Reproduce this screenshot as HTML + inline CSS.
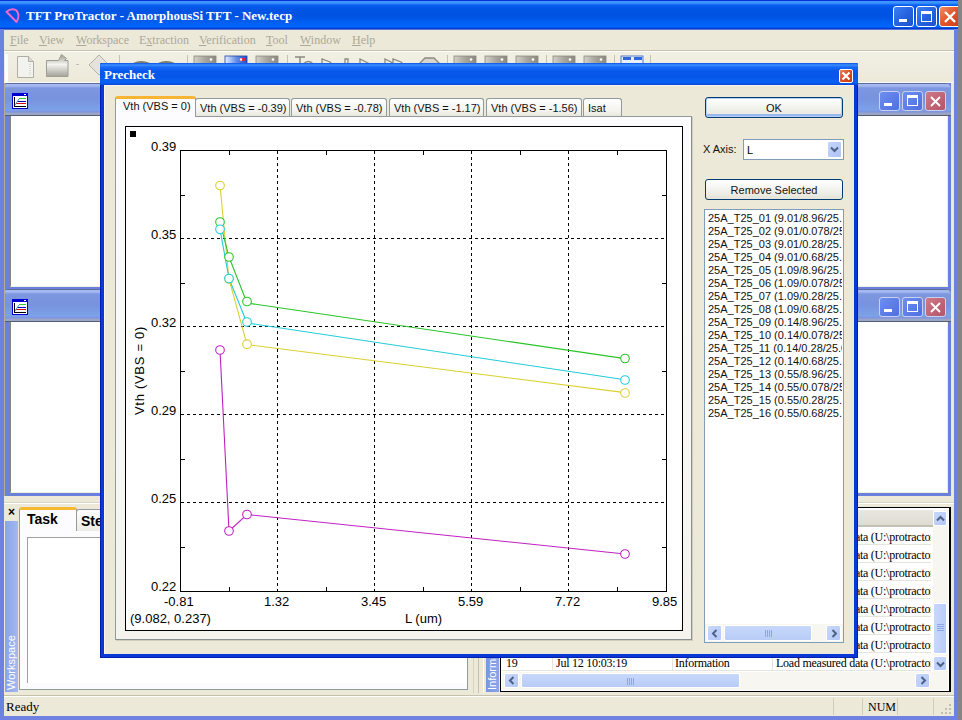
<!DOCTYPE html>
<html><head><meta charset="utf-8">
<style>
*{box-sizing:border-box}
html,body{margin:0;padding:0}
body{width:962px;height:720px;overflow:hidden;position:relative;background:#858585;font-family:"Liberation Sans",sans-serif;font-size:11px;color:#000}
.a{position:absolute}
.serif{font-family:"Liberation Serif",serif}
.tb-btn{position:absolute;border:1px solid #fff;border-radius:3px;background:linear-gradient(135deg,#3c81f3 0%,#2663e0 50%,#1d50d0 100%)}
.mdi-title{border-radius:5px 6px 0 0;background:linear-gradient(#5b6b9b 0,#5b6b9b 1px,#a6b8f2 1px,#a6b8f2 3px,#7d97e0 5px,#7893de 16px,#7ca2e8 27px,#8090e0 29px,#9aa6c8 30px,#9aa6c8 32px,#555e70 32px)}
.ibtn{position:absolute;border:1px solid #c8d2f0;border-radius:3px;background:linear-gradient(135deg,#6d8ef0,#4f6fe0)}
.tab{position:absolute;border:1px solid #919b9c;border-bottom:none;border-radius:3px 3px 0 0;background:linear-gradient(#fefefe,#f4f3ee 70%,#e8e6dc);white-space:nowrap;padding-left:4px;padding-top:1px;line-height:16px;color:#111}
.xpbtn{position:absolute;border:1px solid #003c74;border-radius:3px;background:linear-gradient(#fff,#f0f0ea 60%,#e5e4da);text-align:center;padding-top:1px;color:#111}
.sbtn{position:absolute;border-radius:2px;background:linear-gradient(135deg,#c8d8fc,#b4c8f6);border:1px solid #fff}
</style></head><body>

<!-- ===== MAIN WINDOW FRAME ===== -->
<div class="a" style="left:0;top:0;width:958px;height:720px;background:#ece9d8"></div>
<div class="a" style="left:0;top:0;width:958px;height:30px;background:linear-gradient(#0831d9 0,#0831d9 1px,#3d95ff 1px,#3d95ff 3px,#0a5ff0 5px,#0054e3 9px,#0054e3 17px,#0060f2 23px,#0066ff 27px,#0044d6 28px,#0838c8 29px,#a4b0e8 30px)"></div>
<div class="a" style="left:0;top:29px;width:4px;height:691px;background:#6c82e0"></div>
<div class="a" style="left:954px;top:29px;width:4px;height:691px;background:#6c82e0"></div>
<div class="a" style="left:0;top:716px;width:958px;height:4px;background:#6f82e2"></div>

<!-- title icon -->
<svg class="a" style="left:0;top:0" width="26" height="29"><path d="M6.5 11.8 Q11.5 7.5 16.5 10.5 Q20.5 15 16.5 22 Z" fill="none" stroke="#f068c8" stroke-width="2" stroke-linejoin="round"/></svg>
<div class="a serif" style="left:26px;top:8px;font-size:13px;font-weight:bold;color:#fff;white-space:nowrap;line-height:16px">TFT ProTractor - AmorphousSi TFT - New.tecp</div>

<!-- title buttons -->
<div class="tb-btn" style="left:893px;top:6px;width:21px;height:21px"><div class="a" style="left:5px;top:12px;width:8px;height:3px;background:#fff"></div></div>
<div class="tb-btn" style="left:916px;top:6px;width:21px;height:21px"><div class="a" style="left:4px;top:4px;width:11px;height:11px;border:1px solid #fff;border-top-width:3px"></div></div>
<div class="a" style="left:939px;top:6px;width:19px;height:21px;overflow:hidden"><div class="a" style="left:0;top:0;width:22px;height:21px;border:1px solid #fff;border-radius:3px;background:linear-gradient(135deg,#f08a64,#e0562a 50%,#c8401a)">
<svg class="a" style="left:3px;top:3px" width="14" height="14"><path d="M2 2L12 12M12 2L2 12" stroke="#fff" stroke-width="2.4"/></svg></div></div>

<!-- menu bar -->
<div class="a serif" style="left:4px;top:30px;width:950px;height:20px;color:#aca899;font-size:12px;line-height:20px;white-space:nowrap">
<span class="a" style="left:6px"><u>F</u>ile</span>
<span class="a" style="left:35px"><u>V</u>iew</span>
<span class="a" style="left:72px"><u>W</u>orkspace</span>
<span class="a" style="left:135px">E<u>x</u>traction</span>
<span class="a" style="left:195px"><u>V</u>erification</span>
<span class="a" style="left:262px"><u>T</u>ool</span>
<span class="a" style="left:296px"><u>W</u>indow</span>
<span class="a" style="left:348px"><u>H</u>elp</span>
</div>
<div class="a" style="left:4px;top:50px;width:950px;height:1px;background:#c5c1ae"></div>
<div class="a" style="left:4px;top:51px;width:950px;height:1px;background:#fff"></div>

<!-- toolbar -->
<div id="toolbar" class="a" style="left:4px;top:52px;width:950px;height:31px;background:linear-gradient(#f2f0e4,#ece9d8)"></div>
<div class="a" style="left:5px;top:54px;width:3px;height:28px;background:#fff"></div>
<svg class="a" style="left:0;top:52px" width="700" height="31">
<defs>
<linearGradient id="gw" x1="0" x2="1"><stop offset="0" stop-color="#d4d2c8"/><stop offset="0.5" stop-color="#a8a69c"/><stop offset="1" stop-color="#8c8a80"/></linearGradient>
<linearGradient id="gb" x1="0" x2="1"><stop offset="0" stop-color="#e8f0ff"/><stop offset="0.5" stop-color="#6890e8"/><stop offset="1" stop-color="#2050c0"/></linearGradient>
<linearGradient id="gf" x1="0" y1="0" x2="0" y2="1"><stop offset="0" stop-color="#9c9a90"/><stop offset="0.45" stop-color="#f4f4f0"/><stop offset="1" stop-color="#a4a298"/></linearGradient>
</defs>
<!-- new doc -->
<path d="M17.5 4.5h11l5 5v16h-16z" fill="#f2f2ee" stroke="#b0aea4"/>
<path d="M28.5 4.5v5h5" fill="#dcdad2" stroke="#b0aea4"/>
<path d="M30 12v12" stroke="#c8c6bc" stroke-dasharray="1 1"/>
<!-- folder -->
<path d="M46.5 8.5h12l3-6 5 4-2 2h3.5v16h-21.5z" fill="url(#gf)" stroke="#a09e94"/>
<rect x="76" y="12" width="3" height="1" fill="#c0beb4"/>
<!-- diamond -->
<path d="M99 3l10 10l-10 10l-10-10z" fill="#e4e2da" stroke="#b4b2a8"/>
<rect x="119" y="3" width="1" height="26" fill="#c5c2b2"/>
<path d="M133 11q8-4 17 0z" fill="#7c7e68"/><path d="M158 11q8-4 17 0z" fill="#7c7e68"/>
<rect x="187" y="3" width="1" height="26" fill="#c5c2b2"/>
<rect x="194" y="4" width="22" height="10" fill="url(#gw)" stroke="#8a887e" stroke-width="0.8"/><circle cx="211" cy="7.5" r="1.3" fill="#fff"/>
<rect x="225" y="4" width="22" height="10" fill="url(#gb)" stroke="#2040a0" stroke-width="0.8"/><rect x="240" y="6" width="5" height="3" fill="#e02040"/><circle cx="241" cy="7.5" r="1.2" fill="#fff"/>
<rect x="256" y="4" width="22" height="10" fill="url(#gw)" stroke="#8a887e" stroke-width="0.8"/><circle cx="273" cy="7.5" r="1.3" fill="#fff"/>
<rect x="287" y="3" width="1" height="26" fill="#c5c2b2"/>
<path d="M295 5h10M300 5v8M303 12q6-5 10 0" fill="none" stroke="#8c8a80" stroke-width="1.5"/>
<path d="M322 12v-5l8 3l2 2M345 12v-5h3v5" fill="none" stroke="#8c8a80" stroke-width="1.3"/>
<path d="M360 12v-5l8 4l2 1" fill="none" stroke="#8c8a80" stroke-width="1.3"/>
<path d="M385 12v-5l6 3l2 2v-5l8 3l2 2" fill="none" stroke="#8c8a80" stroke-width="1.3"/>
<path d="M419 12l6-6h9l6 6" fill="#d8d6cc" stroke="#8c8a80" stroke-width="1.3"/>
<rect x="447" y="3" width="1" height="26" fill="#c5c2b2"/>
<rect x="454" y="4" width="22" height="10" fill="url(#gw)" stroke="#8a887e" stroke-width="0.8"/><circle cx="471" cy="7.5" r="1.3" fill="#fff"/>
<rect x="485" y="4" width="22" height="10" fill="url(#gw)" stroke="#8a887e" stroke-width="0.8"/><circle cx="502" cy="7.5" r="1.3" fill="#fff"/>
<rect x="516" y="4" width="22" height="10" fill="url(#gw)" stroke="#8a887e" stroke-width="0.8"/><circle cx="533" cy="7.5" r="1.3" fill="#fff"/>
<rect x="546" y="3" width="1" height="26" fill="#c5c2b2"/>
<rect x="553" y="4" width="22" height="10" fill="url(#gw)" stroke="#8a887e" stroke-width="0.8"/><circle cx="570" cy="7.5" r="1.3" fill="#fff"/>
<rect x="584" y="4" width="22" height="10" fill="url(#gw)" stroke="#8a887e" stroke-width="0.8"/><circle cx="601" cy="7.5" r="1.3" fill="#fff"/>
<rect x="614" y="3" width="1" height="26" fill="#c5c2b2"/>
<rect x="621" y="4" width="22" height="10" fill="#e8eefc" stroke="#3060c0" stroke-width="0.8"/><rect x="623" y="5" width="8" height="3" fill="#3068d8"/><rect x="634" y="5" width="8" height="3" fill="#3068d8"/>
<rect x="650" y="3" width="1" height="26" fill="#c5c2b2"/>
</svg>

<!-- MDI area line -->
<div class="a" style="left:4px;top:82px;width:950px;height:1px;background:#fbfaf4"></div>

<!-- MDI child 1 -->
<div class="a" style="left:4px;top:83px;width:947px;height:207px;background:#6b7fdc"></div>
<div class="a mdi-title" style="left:4px;top:83px;width:947px;height:33px"></div>
<div class="a" style="left:10px;top:116px;width:938px;height:171px;background:#fff;border-left:1px solid #8c8478;border-bottom:1px solid #f0eee0;border-right:1px solid #f0eee0"></div>
<svg class="a" style="left:12px;top:93px" width="16" height="16" viewBox="0 0 16 16" shape-rendering="crispEdges">
<rect x="0" y="0" width="16" height="16" fill="#0000d0"/><rect x="1" y="3" width="14" height="12" fill="#fff"/><rect x="12" y="1" width="2" height="1" fill="#fff"/>
<rect x="2" y="4" width="1" height="10" fill="#000"/><rect x="2" y="13" width="12" height="1" fill="#000"/>
<rect x="4" y="10" width="10" height="1" fill="#e00000"/><rect x="5" y="8" width="9" height="1" fill="#0000c0"/><rect x="7" y="5" width="7" height="1" fill="#40c040"/>
<path d="M3 12L7 6" stroke="#40a0c0" stroke-width="1" shape-rendering="auto"/>
</svg>
<div class="ibtn" style="left:879px;top:91px;width:21px;height:20px"><div class="a" style="left:4px;top:11px;width:8px;height:3px;background:#fff"></div></div>
<div class="ibtn" style="left:902px;top:91px;width:21px;height:20px"><div class="a" style="left:4px;top:3px;width:11px;height:11px;border:1px solid #fff;border-top-width:3px"></div></div>
<div class="ibtn" style="left:925px;top:91px;width:21px;height:20px;background:linear-gradient(135deg,#d07888,#b45468)"><svg class="a" style="left:3px;top:3px" width="13" height="13"><path d="M2 2L11 11M11 2L2 11" stroke="#fff" stroke-width="1.8"/></svg></div>

<!-- MDI child 2 -->
<div class="a" style="left:4px;top:290px;width:947px;height:206px;background:#6b7fdc"></div>
<div class="a mdi-title" style="left:4px;top:289px;width:947px;height:33px"></div>
<div class="a" style="left:10px;top:322px;width:938px;height:171px;background:#fff;border-left:1px solid #8c8478;border-bottom:1px solid #f0eee0;border-right:1px solid #f0eee0"></div>
<div class="a" style="left:4px;top:83px;width:1px;height:413px;background:#b4ac94"></div>


<svg class="a" style="left:12px;top:299px" width="16" height="16" viewBox="0 0 16 16" shape-rendering="crispEdges">
<rect x="0" y="0" width="16" height="16" fill="#0000d0"/><rect x="1" y="3" width="14" height="12" fill="#fff"/><rect x="12" y="1" width="2" height="1" fill="#fff"/>
<rect x="2" y="4" width="1" height="10" fill="#000"/><rect x="2" y="13" width="12" height="1" fill="#000"/>
<rect x="4" y="10" width="10" height="1" fill="#e00000"/><rect x="5" y="8" width="9" height="1" fill="#0000c0"/><rect x="7" y="5" width="7" height="1" fill="#40c040"/>
<path d="M3 12L7 6" stroke="#40a0c0" stroke-width="1" shape-rendering="auto"/>
</svg>
<div class="ibtn" style="left:879px;top:297px;width:21px;height:20px"><div class="a" style="left:4px;top:11px;width:8px;height:3px;background:#fff"></div></div>
<div class="ibtn" style="left:902px;top:297px;width:21px;height:20px"><div class="a" style="left:4px;top:3px;width:11px;height:11px;border:1px solid #fff;border-top-width:3px"></div></div>
<div class="ibtn" style="left:925px;top:297px;width:21px;height:20px;background:linear-gradient(135deg,#d07888,#b45468)"><svg class="a" style="left:3px;top:3px" width="13" height="13"><path d="M2 2L11 11M11 2L2 11" stroke="#fff" stroke-width="1.8"/></svg></div>

<!-- ===== BOTTOM PANELS ===== -->
<div class="a" style="left:4px;top:502px;width:950px;height:1px;background:#d8d4c2"></div>
<div class="a" style="left:4px;top:503px;width:950px;height:1px;background:#fff"></div>
<!-- workspace panel -->
<div class="a" style="left:8px;top:506px;font-size:12px;font-weight:bold;line-height:12px">&#215;</div>
<div class="a" style="left:5px;top:521px;width:13px;height:171px;background:linear-gradient(90deg,#8aa4e8,#a4b8f0)"></div>
<div class="a" style="left:5px;top:692px;width:13px;height:171px;transform-origin:0 0;transform:rotate(-90deg);color:#fff;font-size:11px;line-height:13px;padding-left:2px;white-space:nowrap">Workspace</div>
<div class="a" style="left:19px;top:530px;width:449px;height:160px;background:#fcfcfe;border:1px solid #919b9c"></div>
<div class="a" style="left:27px;top:537px;width:440px;height:146px;background:#fff;border-top:1px solid #a0a0a0;border-left:1px solid #a0a0a0"></div>
<div class="a" style="left:76px;top:509px;width:60px;height:22px;border:1px solid #919b9c;border-bottom:none;border-radius:3px 3px 0 0;background:linear-gradient(#fefefe,#ecebe5);font-weight:bold;font-size:14px;line-height:22px;padding-left:4px">Step</div>
<div class="a" style="left:19px;top:507px;width:58px;height:24px;border:1px solid #919b9c;border-bottom:none;border-radius:3px 3px 0 0;background:#fcfcfe;font-weight:bold;font-size:14px;line-height:19px;padding-left:7px;border-top:3px solid #f8b832">Task</div>
<!-- splitter -->
<div class="a" style="left:473px;top:503px;width:1px;height:190px;background:#d8d4c2"></div>
<div class="a" style="left:478px;top:503px;width:1px;height:190px;background:#c5c1ae"></div>
<div class="a" style="left:483px;top:503px;width:1px;height:190px;background:#fff"></div>
<!-- information panel -->
<div class="a" style="left:486px;top:510px;width:13px;height:182px;background:linear-gradient(90deg,#7a96e0,#8aa4e8)"></div>
<div class="a" style="left:486px;top:692px;width:182px;height:13px;transform-origin:0 0;transform:rotate(-90deg);color:#fff;font-size:11px;line-height:13px;padding-left:2px;white-space:nowrap">Information</div>
<div class="a" style="left:500px;top:507px;width:451px;height:185px;border:1px solid #000;border-right-width:2px;background:#fff"></div>
<div class="a" style="left:502px;top:510px;width:431px;height:17px;background:linear-gradient(#e8e7e0,#dedcd2);border-bottom:2px solid #c4c1b4"></div>
<div id="inforows" class="a serif" style="left:502px;top:527px;width:429px;height:145px;overflow:hidden;font-size:12px;letter-spacing:-0.25px;line-height:16px;white-space:nowrap"><div class="a" style="left:0;top:0px;width:431px;height:18px;border-bottom:1px solid #e6e4dc"><span class="a" style="left:4px;top:2px">12</span><span class="a" style="left:54px;top:2px">Jul 12 10:03:12</span><span class="a" style="left:173px;top:2px">Information</span><span class="a" style="left:274px;top:2px">Load measured data (U:\protractor\data)</span><div class="a" style="left:50px;top:0;width:1px;height:18px;background:#e6e4dc"></div><div class="a" style="left:170px;top:0;width:1px;height:18px;background:#e6e4dc"></div><div class="a" style="left:270px;top:0;width:1px;height:18px;background:#e6e4dc"></div></div><div class="a" style="left:0;top:18px;width:431px;height:18px;border-bottom:1px solid #e6e4dc"><span class="a" style="left:4px;top:2px">13</span><span class="a" style="left:54px;top:2px">Jul 12 10:03:13</span><span class="a" style="left:173px;top:2px">Information</span><span class="a" style="left:274px;top:2px">Load measured data (U:\protractor\data)</span><div class="a" style="left:50px;top:0;width:1px;height:18px;background:#e6e4dc"></div><div class="a" style="left:170px;top:0;width:1px;height:18px;background:#e6e4dc"></div><div class="a" style="left:270px;top:0;width:1px;height:18px;background:#e6e4dc"></div></div><div class="a" style="left:0;top:36px;width:431px;height:18px;border-bottom:1px solid #e6e4dc"><span class="a" style="left:4px;top:2px">14</span><span class="a" style="left:54px;top:2px">Jul 12 10:03:14</span><span class="a" style="left:173px;top:2px">Information</span><span class="a" style="left:274px;top:2px">Load measured data (U:\protractor\data)</span><div class="a" style="left:50px;top:0;width:1px;height:18px;background:#e6e4dc"></div><div class="a" style="left:170px;top:0;width:1px;height:18px;background:#e6e4dc"></div><div class="a" style="left:270px;top:0;width:1px;height:18px;background:#e6e4dc"></div></div><div class="a" style="left:0;top:54px;width:431px;height:18px;border-bottom:1px solid #e6e4dc"><span class="a" style="left:4px;top:2px">15</span><span class="a" style="left:54px;top:2px">Jul 12 10:03:15</span><span class="a" style="left:173px;top:2px">Information</span><span class="a" style="left:274px;top:2px">Load measured data (U:\protractor\data)</span><div class="a" style="left:50px;top:0;width:1px;height:18px;background:#e6e4dc"></div><div class="a" style="left:170px;top:0;width:1px;height:18px;background:#e6e4dc"></div><div class="a" style="left:270px;top:0;width:1px;height:18px;background:#e6e4dc"></div></div><div class="a" style="left:0;top:72px;width:431px;height:18px;border-bottom:1px solid #e6e4dc"><span class="a" style="left:4px;top:2px">16</span><span class="a" style="left:54px;top:2px">Jul 12 10:03:16</span><span class="a" style="left:173px;top:2px">Information</span><span class="a" style="left:274px;top:2px">Load measured data (U:\protractor\data)</span><div class="a" style="left:50px;top:0;width:1px;height:18px;background:#e6e4dc"></div><div class="a" style="left:170px;top:0;width:1px;height:18px;background:#e6e4dc"></div><div class="a" style="left:270px;top:0;width:1px;height:18px;background:#e6e4dc"></div></div><div class="a" style="left:0;top:90px;width:431px;height:18px;border-bottom:1px solid #e6e4dc"><span class="a" style="left:4px;top:2px">17</span><span class="a" style="left:54px;top:2px">Jul 12 10:03:17</span><span class="a" style="left:173px;top:2px">Information</span><span class="a" style="left:274px;top:2px">Load measured data (U:\protractor\data)</span><div class="a" style="left:50px;top:0;width:1px;height:18px;background:#e6e4dc"></div><div class="a" style="left:170px;top:0;width:1px;height:18px;background:#e6e4dc"></div><div class="a" style="left:270px;top:0;width:1px;height:18px;background:#e6e4dc"></div></div><div class="a" style="left:0;top:108px;width:431px;height:18px;border-bottom:1px solid #e6e4dc"><span class="a" style="left:4px;top:2px">18</span><span class="a" style="left:54px;top:2px">Jul 12 10:03:18</span><span class="a" style="left:173px;top:2px">Information</span><span class="a" style="left:274px;top:2px">Load measured data (U:\protractor\data)</span><div class="a" style="left:50px;top:0;width:1px;height:18px;background:#e6e4dc"></div><div class="a" style="left:170px;top:0;width:1px;height:18px;background:#e6e4dc"></div><div class="a" style="left:270px;top:0;width:1px;height:18px;background:#e6e4dc"></div></div><div class="a" style="left:0;top:126px;width:431px;height:18px;border-bottom:1px solid #e6e4dc"><span class="a" style="left:4px;top:2px">19</span><span class="a" style="left:54px;top:2px">Jul 12 10:03:19</span><span class="a" style="left:173px;top:2px">Information</span><span class="a" style="left:274px;top:2px">Load measured data (U:\protractor\data)</span><div class="a" style="left:50px;top:0;width:1px;height:18px;background:#e6e4dc"></div><div class="a" style="left:170px;top:0;width:1px;height:18px;background:#e6e4dc"></div><div class="a" style="left:270px;top:0;width:1px;height:18px;background:#e6e4dc"></div></div></div>
<!-- vscroll -->
<div class="a" style="left:933px;top:510px;width:15px;height:162px;background:#f7f6f0"></div>
<div class="sbtn" style="left:933px;top:511px;width:14px;height:15px"><svg class="a" style="left:2px;top:3px" width="9" height="7"><path d="M1 5.5L4.5 2L8 5.5" fill="none" stroke="#4d6185" stroke-width="2"/></svg></div>
<div class="sbtn" style="left:933px;top:603px;width:14px;height:51px;background:linear-gradient(90deg,#c8d8fc,#b8ccf6)"><div class="a" style="left:3px;top:20px;width:7px;height:7px;background:repeating-linear-gradient(#8ea6e8 0,#8ea6e8 1px,transparent 1px,transparent 2px)"></div></div>
<div class="sbtn" style="left:933px;top:656px;width:14px;height:15px"><svg class="a" style="left:2px;top:4px" width="9" height="7"><path d="M1 1.5L4.5 5L8 1.5" fill="none" stroke="#4d6185" stroke-width="2"/></svg></div>
<!-- hscroll -->
<div class="a" style="left:502px;top:672px;width:446px;height:18px;background:#f7f6f0"></div>
<div class="sbtn" style="left:504px;top:673px;width:15px;height:15px"><svg class="a" style="left:3px;top:2px" width="7" height="9"><path d="M5.5 1L2 4.5L5.5 8" fill="none" stroke="#4d6185" stroke-width="2"/></svg></div>
<div class="sbtn" style="left:521px;top:673px;width:219px;height:15px;background:linear-gradient(#c8d8fc,#b8ccf6)"><div class="a" style="left:105px;top:4px;width:7px;height:7px;background:repeating-linear-gradient(90deg,#8ea6e8 0,#8ea6e8 1px,transparent 1px,transparent 2px)"></div></div>
<div class="sbtn" style="left:915px;top:673px;width:15px;height:15px"><svg class="a" style="left:4px;top:2px" width="7" height="9"><path d="M1.5 1L5 4.5L1.5 8" fill="none" stroke="#4d6185" stroke-width="2"/></svg></div>

<!-- status bar -->
<div class="a" style="left:4px;top:695px;width:950px;height:1px;background:#c5c1ae"></div>
<div class="a" style="left:4px;top:696px;width:950px;height:1px;background:#fff"></div>
<div class="a serif" style="left:6px;top:699px;font-size:13px;line-height:15px">Ready</div>
<div class="a" style="left:833px;top:698px;width:1px;height:17px;background:#d0ccb8"></div><div class="a" style="left:862px;top:698px;width:1px;height:17px;background:#d0ccb8"></div>
<div class="a serif" style="left:868px;top:700px;font-size:12px;line-height:15px">NUM</div>
<div class="a" style="left:897px;top:698px;width:1px;height:17px;background:#d0ccb8"></div>
<div class="a" style="left:933px;top:698px;width:1px;height:17px;background:#d0ccb8"></div>
<svg class="a" style="left:940px;top:703px" width="13" height="13"><g fill="#c3bfac"><rect x="9" y="1" width="2" height="2"/><rect x="5" y="5" width="2" height="2"/><rect x="9" y="5" width="2" height="2"/><rect x="1" y="9" width="2" height="2"/><rect x="5" y="9" width="2" height="2"/><rect x="9" y="9" width="2" height="2"/></g></svg>


<!-- ===== PRECHECK DIALOG ===== -->
<div class="a" style="left:100px;top:63px;width:758px;height:595px;background:#0838d8;border-radius:2px 2px 0 0;box-shadow:inset 0 0 0 1px #0020b0"></div>
<div class="a" style="left:100px;top:63px;width:758px;height:22px;border-radius:2px 2px 0 0;background:linear-gradient(#0a50e8 0,#3d90ff 2px,#1a6af8 4px,#0858ec 8px,#0656e8 14px,#0862f4 19px,#0854e4 21px,#0840d0 22px)"></div>
<div class="a" style="left:104px;top:85px;width:750px;height:569px;background:#ece9d8;border-top:1px solid #f8f6ee;border-left:1px solid #f8f6ee"></div>
<div class="a serif" style="left:104px;top:67px;font-size:13px;font-weight:bold;color:#fff;line-height:15px;white-space:nowrap">Precheck</div>
<div class="a" style="left:839px;top:69px;width:14px;height:14px;border:1px solid #fff;border-radius:2px;background:linear-gradient(135deg,#ec8060,#d84a24 55%,#c03a18)">
<svg class="a" style="left:1px;top:1px" width="10" height="10"><path d="M1.5 1.5L8.5 8.5M8.5 1.5L1.5 8.5" stroke="#fff" stroke-width="2.2"/></svg></div>

<!-- tab panel -->
<div class="a" style="left:115px;top:116px;width:577px;height:524px;border:1px solid #919b9c;border-right-color:#8a9090;border-bottom-color:#8a9090;background:linear-gradient(#fcfcfe,#f4f3ee);box-shadow:1px 1px 0 #d0cdbc"></div>
<div class="tab" style="left:195px;top:98px;width:95px;height:18px">Vth (VBS = -0.39)</div>
<div class="tab" style="left:291px;top:98px;width:96px;height:18px">Vth (VBS = -0.78)</div>
<div class="tab" style="left:389px;top:98px;width:95px;height:18px">Vth (VBS = -1.17)</div>
<div class="tab" style="left:486px;top:98px;width:96px;height:18px">Vth (VBS = -1.56)</div>
<div class="tab" style="left:583px;top:98px;width:39px;height:18px">Isat</div>
<div class="tab" style="left:115px;top:96px;width:81px;height:21px;background:#fcfcfe;border-top:3px solid #f8b433;padding-left:7px;padding-top:0;line-height:14px">Vth (VBS = 0)</div>

<!-- chart -->
<svg class="a" style="left:0;top:0" width="962" height="720" id="chart">
<g shape-rendering="crispEdges">
<rect x="125.5" y="126.5" width="557" height="504" fill="#fff" stroke="#000" stroke-width="1"/>
<rect x="130" y="131" width="6" height="6" fill="#000"/>
<rect x="180.5" y="150.5" width="486" height="441" fill="none" stroke="#000" stroke-width="1"/>
<g stroke="#000" stroke-width="1" stroke-dasharray="3 3">
<path d="M277.5 151V591M374.5 151V591M471.5 151V591M568.5 151V591"/>
<path d="M181 238.5H666M181 326.5H666M181 414.5H666M181 502.5H666"/>
</g>
<g stroke="#000" stroke-width="1">
<path d="M229.5 151v4M326.5 151v4M423.5 151v4M520.5 151v4M617.5 151v4"/>
<path d="M229.5 591v-4M326.5 591v-4M423.5 591v-4M520.5 591v-4M617.5 591v-4"/>
<path d="M181 195.5h4M181 283.5h4M181 371.5h4M181 459.5h4M181 547.5h4"/>
<path d="M666 195.5h-4M666 283.5h-4M666 371.5h-4M666 459.5h-4M666 547.5h-4"/>
</g>
</g>
<g fill="none" stroke-width="1.1"><polyline points="220,185.5 229,279 247,344.6 625,392.6" stroke="#dcd030"/><polyline points="220,222 229,257 247,303 625,358.6" stroke="#28c428"/><polyline points="220,229.3 229,278.5 247,323 625,379.8" stroke="#22ccd8"/><polyline points="220,350 229,531 247,514.5 625,554" stroke="#c020c0"/></g>
<g fill="#fff" stroke-width="1.1"><g stroke="#dcd030"><circle cx="220" cy="185.5" r="4.3"/><circle cx="229" cy="279" r="4.3"/><circle cx="247" cy="344.2" r="4.3"/><circle cx="625" cy="393" r="4.3"/></g><g stroke="#28c428"><circle cx="220" cy="222" r="4.3"/><circle cx="229" cy="257" r="4.3"/><circle cx="247" cy="301.5" r="4.3"/><circle cx="625" cy="358.5" r="4.3"/></g><g stroke="#22ccd8"><circle cx="220" cy="229.3" r="4.3"/><circle cx="229" cy="278.5" r="4.3"/><circle cx="247" cy="322" r="4.3"/><circle cx="625" cy="380" r="4.3"/></g><g stroke="#c020c0"><circle cx="220" cy="350" r="4.3"/><circle cx="229" cy="531" r="4.3"/><circle cx="247" cy="514.5" r="4.3"/><circle cx="625" cy="554" r="4.3"/></g></g>
</svg>
<div class="a" style="left:0;top:0;font-size:13px;line-height:13px;white-space:nowrap">
<span class="a" style="left:151px;top:140px">0.39</span>
<span class="a" style="left:151px;top:228px">0.35</span>
<span class="a" style="left:151px;top:316px">0.32</span>
<span class="a" style="left:151px;top:404px">0.29</span>
<span class="a" style="left:151px;top:492px">0.25</span>
<span class="a" style="left:151px;top:580px">0.22</span>
<span class="a" style="left:164px;top:595px">-0.81</span>
<span class="a" style="left:264px;top:595px">1.32</span>
<span class="a" style="left:361px;top:595px">3.45</span>
<span class="a" style="left:458px;top:595px">5.59</span>
<span class="a" style="left:555px;top:595px">7.72</span>
<span class="a" style="left:652px;top:595px">9.85</span>
<span class="a" style="left:405px;top:612px">L (um)</span>
<span class="a" style="left:130px;top:612px">(9.082, 0.237)</span>
</div>
<div class="a" style="left:133px;top:415px;width:90px;height:13px;transform-origin:0 0;transform:rotate(-90deg);font-size:13px;line-height:13px;letter-spacing:0.7px;white-space:nowrap">Vth (VBS = 0)</div>

<!-- right controls -->
<div class="xpbtn" style="left:705px;top:97px;width:138px;height:21px;line-height:19px;box-shadow:inset 0 0 0 1px #b8d0f8, inset 0 -2px 0 1px #98b8f0">OK</div>
<div class="a" style="left:703px;top:143px;line-height:13px;color:#111">X Axis:</div>
<div class="a" style="left:743px;top:139px;width:101px;height:21px;border:1px solid #7f9db9;background:#fff;padding-left:3px;padding-top:1px;line-height:19px">L</div>
<div class="a" style="left:827px;top:141px;width:15px;height:17px;border-radius:2px;background:linear-gradient(135deg,#c4d4fa,#b0c4f4);border:1px solid #fff">
<svg class="a" style="left:2px;top:4px" width="9" height="7"><path d="M1 1.5L4.5 5L8 1.5" fill="none" stroke="#4d6185" stroke-width="2"/></svg></div>
<div class="xpbtn" style="left:705px;top:179px;width:138px;height:21px;line-height:19px">Remove Selected</div>
<div class="a" style="left:704px;top:209px;width:140px;height:434px;border:1px solid #7f9db9;background:#fff"></div>
<div class="a" style="left:705px;top:210px;width:137px;height:414px;overflow:hidden;white-space:nowrap;line-height:13px;padding:2px 0 0 3px;color:#111">
25A_T25_01 (9.01/8.96/25.0)<br>25A_T25_02 (9.01/0.078/25.0)<br>25A_T25_03 (9.01/0.28/25.0)<br>25A_T25_04 (9.01/0.68/25.0)<br>
25A_T25_05 (1.09/8.96/25.0)<br>25A_T25_06 (1.09/0.078/25.0)<br>25A_T25_07 (1.09/0.28/25.0)<br>25A_T25_08 (1.09/0.68/25.0)<br>
25A_T25_09 (0.14/8.96/25.0)<br>25A_T25_10 (0.14/0.078/25.0)<br>25A_T25_11 (0.14/0.28/25.0)<br>25A_T25_12 (0.14/0.68/25.0)<br>
25A_T25_13 (0.55/8.96/25.0)<br>25A_T25_14 (0.55/0.078/25.0)<br>25A_T25_15 (0.55/0.28/25.0)<br>25A_T25_16 (0.55/0.68/25.0)
</div>
<div class="a" style="left:705px;top:624px;width:138px;height:18px;background:#f7f6f0"></div>
<div class="sbtn" style="left:707px;top:625px;width:15px;height:16px"><svg class="a" style="left:3px;top:3px" width="7" height="9"><path d="M5.5 1L2 4.5L5.5 8" fill="none" stroke="#4d6185" stroke-width="2"/></svg></div>
<div class="sbtn" style="left:724px;top:625px;width:88px;height:16px;background:linear-gradient(#c8d8fc,#b8ccf6)"><div class="a" style="left:40px;top:4px;width:7px;height:7px;background:repeating-linear-gradient(90deg,#8ea6e8 0,#8ea6e8 1px,transparent 1px,transparent 2px)"></div></div>
<div class="sbtn" style="left:826px;top:625px;width:15px;height:16px"><svg class="a" style="left:4px;top:3px" width="7" height="9"><path d="M1.5 1L5 4.5L1.5 8" fill="none" stroke="#4d6185" stroke-width="2"/></svg></div>

</body></html>
